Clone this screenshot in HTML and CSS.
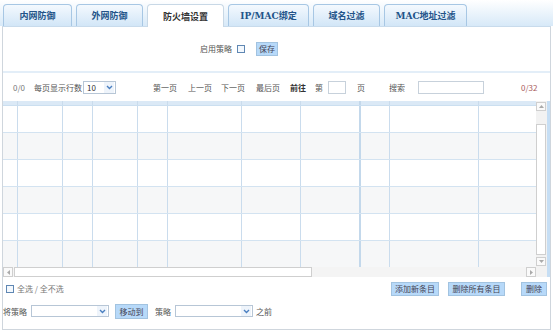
FILE: index.html
```html
<!DOCTYPE html>
<html lang="zh">
<head>
	<meta charset="UTF-8" />
	<title>防火墙设置</title>
	<link rel="stylesheet" href="styles.css">
</head>
<body>
<div class="tabs">
	<div class="tab w1">内网防御</div>
	<div class="tab w2">外网防御</div>
	<div class="tab w3 active">防火墙设置</div>
	<div class="tab w4">IP/MAC绑定</div>
	<div class="tab w5">域名过滤</div>
	<div class="tab w6">MAC地址过滤</div>
</div>
<div class="panel">
	<div class="enable-row">
		<span>启用策略</span>
		<span class="check"></span>
		<span class="btn save">保存</span>
	</div>
	<div class="pager">
		<span class="count">0/0</span>
		<span class="per-page">每页显示行数</span>
		<span class="select small"><span class="val">10</span><span class="arrow"><svg width="7" height="5" viewBox="0 0 7 5"><path d="M1 1 L3.5 3.5 L6 1" fill="none" stroke="#4a7fc0" stroke-width="1.4"/></svg></span></span>
		<span class="nav first">第一页</span>
		<span class="nav">上一页</span>
		<span class="nav n3">下一页</span>
		<span class="nav">最后页</span>
		<span class="nav goto">前往</span>
		<span class="nav n6">第</span>
		<span class="page-input"></span>
		<span class="nav">页</span>
		<span class="search">搜索</span>
		<span class="search-input"></span>
		<span class="total">0/32</span>
	</div>
	<div class="grid-wrap">
		<div class="grid-main">
			<div class="grid">
				<div class="row head">
					<span class="c1"></span><span class="c2"></span><span class="c3"></span><span class="c4"></span><span class="c5"></span><span class="c6"></span><span class="c7"></span><span class="c8"></span><span class="c9"></span><span class="c10"></span><span class="c11"></span>
				</div>
				<div class="row">
					<span class="c1"></span><span class="c2"></span><span class="c3"></span><span class="c4"></span><span class="c5"></span><span class="c6"></span><span class="c7"></span><span class="c8"></span><span class="c9"></span><span class="c10"></span><span class="c11"></span>
				</div>
				<div class="row alt">
					<span class="c1"></span><span class="c2"></span><span class="c3"></span><span class="c4"></span><span class="c5"></span><span class="c6"></span><span class="c7"></span><span class="c8"></span><span class="c9"></span><span class="c10"></span><span class="c11"></span>
				</div>
				<div class="row">
					<span class="c1"></span><span class="c2"></span><span class="c3"></span><span class="c4"></span><span class="c5"></span><span class="c6"></span><span class="c7"></span><span class="c8"></span><span class="c9"></span><span class="c10"></span><span class="c11"></span>
				</div>
				<div class="row alt">
					<span class="c1"></span><span class="c2"></span><span class="c3"></span><span class="c4"></span><span class="c5"></span><span class="c6"></span><span class="c7"></span><span class="c8"></span><span class="c9"></span><span class="c10"></span><span class="c11"></span>
				</div>
				<div class="row">
					<span class="c1"></span><span class="c2"></span><span class="c3"></span><span class="c4"></span><span class="c5"></span><span class="c6"></span><span class="c7"></span><span class="c8"></span><span class="c9"></span><span class="c10"></span><span class="c11"></span>
				</div>
				<div class="row alt last">
					<span class="c1"></span><span class="c2"></span><span class="c3"></span><span class="c4"></span><span class="c5"></span><span class="c6"></span><span class="c7"></span><span class="c8"></span><span class="c9"></span><span class="c10"></span><span class="c11"></span>
				</div>
			</div>
			<div class="vscroll">
				<span class="sb-btn"><svg width="5" height="3" viewBox="0 0 5 3"><path d="M0 3 L2.5 0 L5 3 Z" fill="#aaa"/></svg></span>
				<span class="vtrack"><span class="vthumb"></span></span>
				<span class="sb-btn"><svg width="5" height="3" viewBox="0 0 5 3"><path d="M0 0 L2.5 3 L5 0 Z" fill="#aaa"/></svg></span>
			</div>
		</div>
		<div class="hscroll">
			<span class="sb-btn"><svg width="3" height="5" viewBox="0 0 3 5"><path d="M3 0 L0 2.5 L3 5 Z" fill="#aaa"/></svg></span>
			<span class="htrack"><span class="hthumb"></span></span>
			<span class="sb-btn"><svg width="3" height="5" viewBox="0 0 3 5"><path d="M0 0 L3 2.5 L0 5 Z" fill="#aaa"/></svg></span>
			<span class="corner"></span>
		</div>
	</div>
	<div class="actions">
		<span class="check"></span>
		<span class="select-all">全选 / 全不选</span>
		<span class="spacer"></span>
		<span class="btn add">添加新条目</span>
		<span class="btn del-all">删除所有条目</span>
		<span class="btn del">删除</span>
	</div>
	<div class="move-row">
		<span>将策略</span>
		<span class="select wide"><span class="val"></span><span class="arrow"><svg width="7" height="5" viewBox="0 0 7 5"><path d="M1 1 L3.5 3.5 L6 1" fill="none" stroke="#4a7fc0" stroke-width="1.4"/></svg></span></span>
		<span class="btn move">移动到</span>
		<span class="policy">策略</span>
		<span class="select wide"><span class="val"></span><span class="arrow"><svg width="7" height="5" viewBox="0 0 7 5"><path d="M1 1 L3.5 3.5 L6 1" fill="none" stroke="#4a7fc0" stroke-width="1.4"/></svg></span></span>
		<span class="before">之前</span>
	</div>
</div>
</body>
</html>
```

FILE: styles.css
```css
* {
	padding: 0;
	margin: 0;
	box-sizing: border-box;
}
html, body {
	width: 553px;
	height: 331px;
	background: #fff;
	overflow: hidden;
}
body {
	font-family: "Noto Sans CJK SC", "DejaVu Sans", sans-serif;
	font-size: 8px;
	color: #555;
}

/* tabs */
.tabs {
	display: flex;
	align-items: flex-end;
	gap: 4px;
	height: 26px;
	padding-left: 3px;
	background: linear-gradient(#ffffff, #d7e9f8);
}
.tab {
	height: 22px;
	display: flex;
	align-items: center;
	justify-content: center;
	border: 1px solid #a7c7e4;
	border-bottom: none;
	border-radius: 4px 4px 0 0;
	background: linear-gradient(#f4f9fe, #d2e6f7);
	color: #235489;
	font-weight: bold;
	font-size: 9px;
	font-family: "DejaVu Serif", "Noto Sans CJK SC", serif;
}
.tab.active {
	background: #fff;
	color: #333;
	height: 23px;
	margin-bottom: -1px;
	border-color: #c8d8e6;
}
.w1 { width: 69px; }
.w2 { width: 67px; }
.w3 { width: 77px; }
.w4 { width: 81px; }
.w5 { width: 67px; }
.w6 { width: 83px; }

/* panel */
.panel {
	margin-left: 2px;
	width: 549px;
	height: 304px;
	border: 1px solid #cfd6dd;
	border-top-color: #c8dbec;
	display: flex;
	flex-direction: column;
}
.enable-row {
	height: 44px;
	display: flex;
	align-items: center;
	padding-left: 197px;
	padding-bottom: 1px;
}
.check {
	width: 8px;
	height: 8px;
	border: 1px solid #5f87b3;
	background: #f3f8fd;
	display: inline-block;
}
.enable-row .check {
	margin-left: 5px;
}
.btn {
	display: inline-flex;
	align-items: center;
	justify-content: center;
	height: 14px;
	background: #b7d9f9;
	border: 1px solid #a2c3e0;
	color: #445;
}
.save {
	width: 22px;
	margin-left: 11px;
}

/* pager */
.pager {
	height: 30px;
	border-top: 2px solid #e3eef8;
	display: flex;
	align-items: center;
	padding-left: 10px;
}
.count {
	color: #777;
}
.per-page {
	margin-left: 9px;
}
.select {
	display: inline-flex;
	height: 13px;
	border: 1px solid #b7c6d6;
	background: #fff;
	align-items: center;
	justify-content: space-between;
}
.select .val {
	padding-left: 3px;
	color: #333;
}
.select .arrow {
	width: 10px;
	height: 11px;
	display: flex;
	align-items: center;
	justify-content: center;
	background: #eef4fb;
	margin-right: 1px;
}
.small {
	width: 33px;
	margin-left: 1px;
}
.nav {
	margin-left: 11px;
	color: #555;
}
.nav.first {
	margin-left: 37px;
}
.nav.n3 {
	margin-left: 9px;
}
.goto {
	margin-left: 10px;
	color: #333;
	font-weight: bold;
}
.nav.n6 {
	margin-left: 9px;
}
.page-input {
	width: 18px;
	height: 13px;
	border: 1px solid #c7d1db;
	margin-left: 5px;
}
.search {
	margin-left: 24px;
}
.search-input {
	width: 66px;
	height: 13px;
	border: 1px solid #c7d1db;
	margin-left: 13px;
}
.total {
	margin-left: 37px;
	color: #a85a5a;
}

/* grid */
.grid-wrap {
	height: 176px;
	border-right: 3px solid #c6def4;
	display: flex;
	flex-direction: column;
}
.grid-main {
	display: flex;
	height: 166px;
}
.grid {
	flex: 1;
	overflow: hidden;
}
.row {
	display: flex;
	height: 27px;
	border-bottom: 1px solid #d3e3f1;
	background: #fff;
}
.row.alt {
	background: #f6f7f8;
}
.row.head {
	height: 5px;
	background: #dbe9f6;
	border-bottom: 1px solid #cbdff0;
}
.row.last {
	border-bottom: none;
}
.row span {
	border-right: 1px solid #cadced;
	height: 100%;
}
.c1 { width: 15px; }
.c2 { width: 45px; }
.c3 { width: 30px; }
.c4 { width: 45px; }
.c5 { width: 30px; }
.c6 { width: 74px; }
.c7 { width: 59px; }
.row span.c8 { width: 60px; border-right: 2px solid #c3d8eb; }
.c9 { width: 29px; }
.c10 { width: 89px; }
.row span.c11 { flex: 1; border-right: none; }

.vscroll {
	width: 11px;
	display: flex;
	flex-direction: column;
	background: #f2f2f2;
	padding: 1px 0;
}
.sb-btn {
	width: 10px;
	height: 9px;
	border: 1px solid #cfcfcf;
	background: #fafafa;
	display: flex;
	align-items: center;
	justify-content: center;
	flex-shrink: 0;
}
.vtrack {
	flex: 1;
	padding-top: 13px;
	padding-bottom: 2px;
	display: flex;
}
.vthumb {
	width: 10px;
	height: 100%;
	border: 1px solid #cfcfcf;
	background: #fff;
}
.hscroll {
	height: 10px;
	display: flex;
	background: #f4f4f4;
}
.hscroll .sb-btn {
	height: 10px;
}
.htrack {
	flex: 1;
	display: flex;
	padding-left: 1px;
}
.hthumb {
	width: 298px;
	height: 10px;
	border: 1px solid #cfcfcf;
	background: #fff;
}
.corner {
	width: 11px;
	background: #f2f2f2;
}

/* bottom */
.actions {
	height: 23px;
	display: flex;
	align-items: center;
	padding-left: 3px;
	padding-right: 3px;
}
.select-all {
	margin-left: 3px;
	color: #777;
}
.spacer {
	flex: 1;
}
.add {
	width: 48px;
}
.del-all {
	width: 57px;
	margin-left: 9px;
}
.del {
	width: 26px;
	margin-left: 16px;
}
.move-row {
	flex: 1;
	display: flex;
	align-items: center;
	padding-bottom: 7px;
	color: #555;
}
.wide {
	width: 78px;
	height: 12px;
	margin-left: 4px;
}
.wide .arrow {
	height: 10px;
}
.move {
	width: 33px;
	margin-left: 6px;
	height: 15px;
}
.policy {
	margin-left: 7px;
}
.before {
	margin-left: 3px;
}
```
